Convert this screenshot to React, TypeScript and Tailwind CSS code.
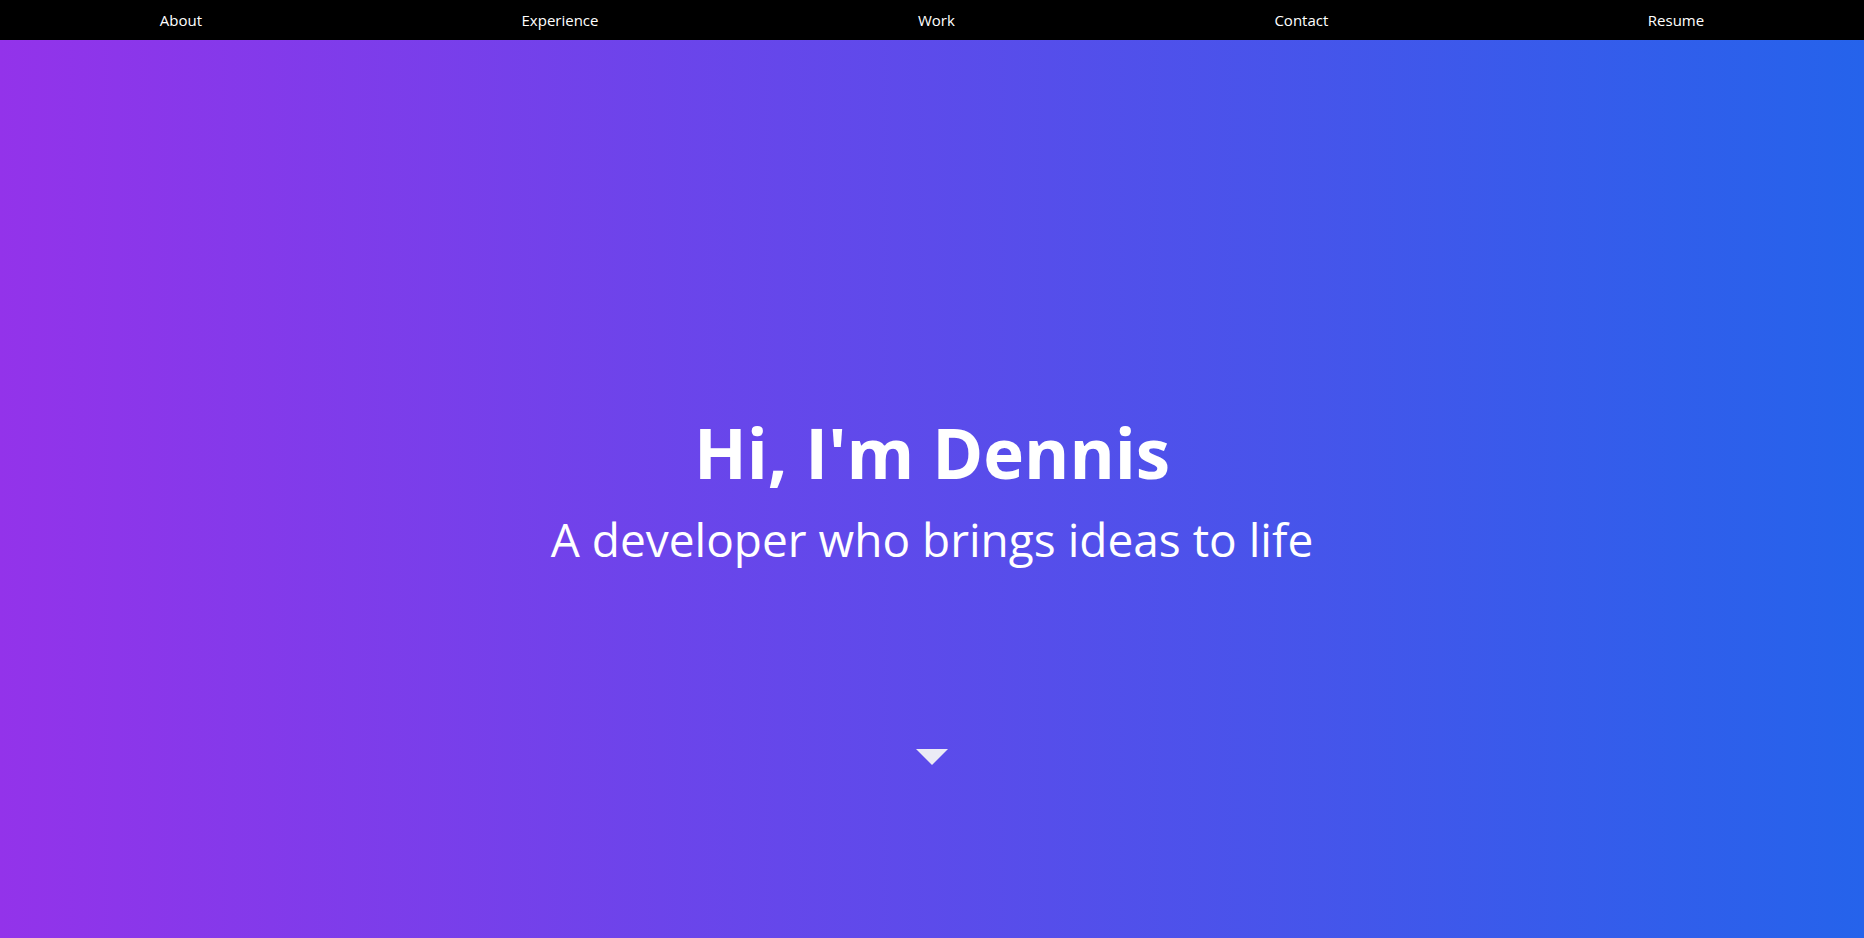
import React from "react";

const links = ["About", "Experience", "Work", "Contact", "Resume"];

export default function App() {
  return (
    <div className="flex h-[938px] flex-col font-['Segoe_UI','Open_Sans',sans-serif] text-white">
      <nav className="flex h-10 items-center justify-around bg-black">
        {links.map((l) => (
          <a key={l} href="#" className="text-[15px] leading-none text-white">
            {l}
          </a>
        ))}
      </nav>
      <section className="relative flex flex-1 flex-col items-center justify-center bg-[linear-gradient(to_right,#9333ea,#2563eb)]">
        <h1 className="mb-[19px] text-[69px] font-bold leading-[1.2]">Hi, I'm Dennis</h1>
        <p className="text-[46px] leading-[1.2]">A developer who brings ideas to life</p>
        <div className="absolute bottom-[173px] left-1/2 h-0 w-0 -translate-x-1/2 border-x-[16px] border-t-[16px] border-x-transparent border-t-[#ebebf5]" />
      </section>
    </div>
  );
}
